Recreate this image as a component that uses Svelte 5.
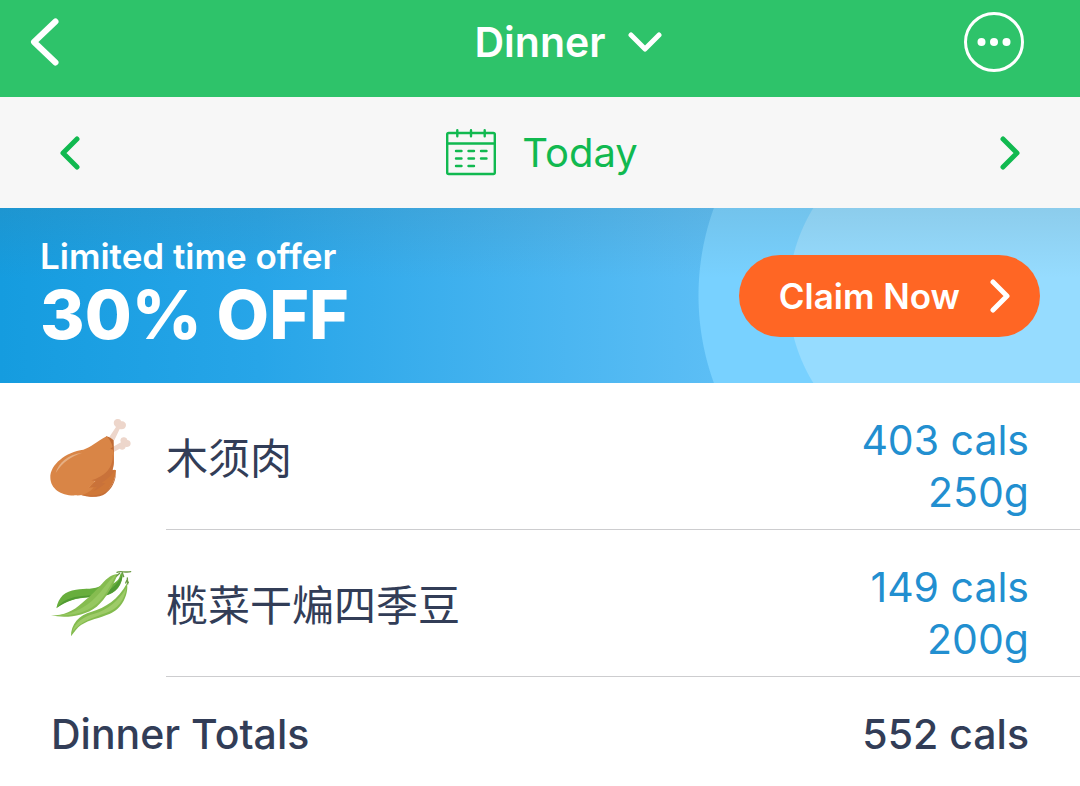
<script>
  const foods = [
    { name: '木须肉', icon: 'chicken', cals: '403 cals', weight: '250g' },
    { name: '榄菜干煸四季豆', icon: 'beans', cals: '149 cals', weight: '200g' }
  ];
</script>

<header class="topbar">
  <button class="icon-button" aria-label="Back">
    <svg width="32" height="50" viewBox="0 0 32 50"><path d="M27.500 4.500 6 25l21.500 20.500" stroke-width="6" /></svg>
  </button>
  <button class="meal">
    Dinner
    <svg width="34" height="20" viewBox="0 0 34 20"><path d="m3 3 14 14L31 3" stroke-width="5" /></svg>
  </button>
  <button class="icon-button end" aria-label="More options">
    <svg width="60" height="60" viewBox="0 0 60 60">
      <circle cx="30" cy="30" r="28.500" stroke-width="3" />
      <g class="solid"><circle cx="17.500" cy="30" r="4" /><circle cx="30" cy="30" r="4" /><circle cx="42.500" cy="30" r="4" /></g>
    </svg>
  </button>
</header>

<nav class="datebar" aria-label="Date">
  <button class="icon-button" aria-label="Previous day">
    <svg width="20" height="34" viewBox="0 0 20 34"><path d="M17 3 3 17l14 14" stroke-width="5" /></svg>
  </button>
  <button class="today">
    <svg width="50" height="48" viewBox="0 0 50 48">
      <g stroke-width="2.400">
        <rect x="1.200" y="4" width="47.600" height="41" rx="1.500" />
        <path d="M1 14.500h48M11.300 1.200v6M25 1.200v6M38.700 1.200v6" />
        <path d="M10 22h5.500M22.500 22H28M35 22h5.500M10 29.500h5.500M22.500 29.500H28M35 29.500h5.500M10 37h5.500M22.500 37H28" />
      </g>
    </svg>
    Today
  </button>
  <button class="icon-button end" aria-label="Next day">
    <svg width="20" height="34" viewBox="0 0 20 34"><path d="m3 3 14 14L3 31" stroke-width="5" /></svg>
  </button>
</nav>

<section class="offer">
  <div>
    <p class="offer-label">Limited time offer</p>
    <p class="offer-value">30% OFF</p>
  </div>
  <button class="claim">
    Claim Now
    <svg width="20" height="34" viewBox="0 0 20 34"><path d="m3 3 14 14L3 31" stroke-width="5" /></svg>
  </button>
</section>

<main>
  <ul>
    {#each foods as food}
      <li>
        {#if food.icon === 'chicken'}
          <svg class="food" width="84" height="84" viewBox="0 0 252 252" aria-hidden="true">
            <g fill="#edd6cb">
              <path d="M184 66 204 36c-9-7-9-18 0-23 7-3 14-1 16 6 7-2 14 4 14 11 0 10-9 15-19 12l-16 34z" />
              <path d="m190 98 29-16c-4-7 0-14 7-15 6-1 11 2 12 8 8 1 12 8 9 15-3 6-10 7-14 5-1 9-12 12-18 6l-23 13z" />
            </g>
            <path fill="#be6a34" d="M175 64c7 1 15 5 22 12l1 42-5 50-30 26-40-40z" />
            <path fill="#cf7738" d="M192 166c6-2 10-2 12 0-2 30-16 57-38 72-20 10-45 8-66 3l34-38z" />
            <path fill="#d98546" d="M176 64c-31 17-46 32-70 40C54 111 6 148 7 188c1 34 33 55 76 53 24 2 43-9 54-24l-15 1 20-21c30-11 51-36 55-66 2-10 1-20-2-27l-8-3 7-5c-4-13-9-23-18-32z" />
            <path fill="#c9723a" d="M194 118c2 31-13 54-36 66-10 6-18 9-28 12l14 2-16 19 20-2-14 15c14-6 26-14 38-25l-11-1c15-11 30-22 37-36l-5-2c7-15 6-34 1-48z" />
            <path fill="#c66f37" d="M204 166c-1 25-13 52-32 65-17 11-43 12-70 10 27 7 53 6 70-5 21-15 33-40 32-70z" />
            <path fill="#e6af83" d="M23 174c9-31 36-56 80-61-34 12-59 28-80 61z" />
          </svg>
        {:else}
          <svg class="food" width="84" height="84" viewBox="0 0 252 252" aria-hidden="true">
            <path fill="#68ae3d" d="M25 139c6-34 26-52 59-56 29-4 54 1 77-13 28-14 48-22 63-40 2 38-20 64-52 71-34 7-66 1-101 14-17 6-29 12-46 24z" />
            <path fill="#509a33" d="M27 137c24-31 58-34 88-36 45-4 83-11 109-65-3 36-22 58-55 65-46 7-89-3-142 36z" />
            <path fill="#fff" d="M193 65c3-14 12-25 24-30-1 13-9 24-24 30z" />
            <path fill="#86bc50" d="M9 160c40 0 65-12 94-38 26-21 48-45 59-57 17-18 31-29 48-29-16 35-36 75-64 98-40 31-97 35-137 26z" />
            <path fill="#96c861" d="M28 160c56-4 97-31 130-71 16-19 28-39 46-51-17 33-36 72-63 92-30 23-75 33-113 30z" />
            <path fill="#83bb4e" d="M69 223c-1-35 24-65 62-74 40-11 80-36 106-85 6 35-17 78-51 91-33 14-61 17-87 34-12 8-19 20-30 34z" />
            <path fill="#9ecb68" d="M73 209c9-31 36-46 66-54 38-11 72-37 96-78-5 38-28 64-61 76-36 13-73 23-101 56z" />
            <path fill="none" stroke="#6c9b45" stroke-width="4" d="M207 31c10-6 25 2 41-2M223 32l4 12M215 34l-9 8M239 66l-1-18M233 63l4-9 4 8" />
          </svg>
        {/if}
        <div class="entry">
          <span class="name" lang="zh-CN">{food.name}</span>
          <span class="amount"><span>{food.cals}</span><span>{food.weight}</span></span>
        </div>
      </li>
    {/each}
  </ul>
  <div class="totals"><span>Dinner Totals</span><span>552 cals</span></div>
</main>

<style>
  :global(body) {
    margin: 0;
    background: #fff;
    color: #323d57;
    font-family: Inter, "Noto Sans CJK SC", sans-serif;
    font-size: 41px;
  }
  button {
    display: flex;
    align-items: center;
    margin: 0;
    padding: 0;
    border: 0;
    background: none;
    color: inherit;
    font: inherit;
    white-space: nowrap;
    cursor: pointer;
  }
  svg {
    display: block;
    flex: none;
    fill: none;
    stroke: currentColor;
    stroke-linecap: round;
    stroke-linejoin: round;
  }
  .solid { fill: currentColor; stroke: none; }
  .topbar, .datebar {
    display: grid;
    grid-template-columns: 1fr auto 1fr;
    align-items: center;
    box-sizing: border-box;
  }
  .icon-button { justify-self: start; }
  .icon-button.end { justify-self: end; }
  .topbar {
    height: 97px;
    padding: 0 56px 14px 28px;
    background: #2ec36a;
    color: #fff;
    font-weight: 600;
  }
  .topbar .meal { gap: 22px; padding-left: 84px; }
  .datebar {
    height: 111px;
    padding: 0 60px;
    background: #f7f7f7;
    color: #11b950;
    font-size: 40px;
  }
  .today { gap: 26px; padding-left: 4px; }
  .offer {
    display: flex;
    align-items: center;
    justify-content: space-between;
    box-sizing: border-box;
    height: 175px;
    padding: 0 40px 4px;
    color: #fff;
    background:
      linear-gradient(rgba(80, 110, 120, 0.14), rgba(80, 110, 120, 0) 40%),
      radial-gradient(circle at calc(100% - 125px) 50%, #96dcff 166px, #78d1ff 167px, #78d1ff 256px, transparent 257px),
      linear-gradient(90deg, #159cdf, #27a5e8 24%, #5cbef5 66%);
  }
  p { margin: 0; }
  .offer-label { font-size: 35px; font-weight: 600; line-height: 40px; }
  .offer-value { font-size: 68px; font-weight: 800; line-height: 76px; }
  .claim {
    gap: 30px;
    height: 82px;
    margin-top: 4px;
    padding: 0 30px 0 40px;
    border-radius: 41px;
    background: #ff6624;
    font-size: 35px;
    font-weight: 600;
  }
  ul { margin: 0; padding: 0; list-style: none; }
  li { display: flex; align-items: center; padding-left: 48px; }
  .food { margin-right: 34px; stroke: none; }
  .entry {
    display: flex;
    flex: 1;
    align-items: center;
    justify-content: space-between;
    padding: 31px 51px 11px 0;
    border-bottom: 1px solid #cdcdcf;
  }
  .name { padding-bottom: 22px; font-size: 42px; }
  .amount {
    display: flex;
    flex-direction: column;
    align-items: flex-end;
    color: #228fd0;
    line-height: 52px;
  }
  .totals {
    display: flex;
    justify-content: space-between;
    padding: 31px 51px 26px;
    font-weight: 500;
    line-height: 52px;
  }
</style>
